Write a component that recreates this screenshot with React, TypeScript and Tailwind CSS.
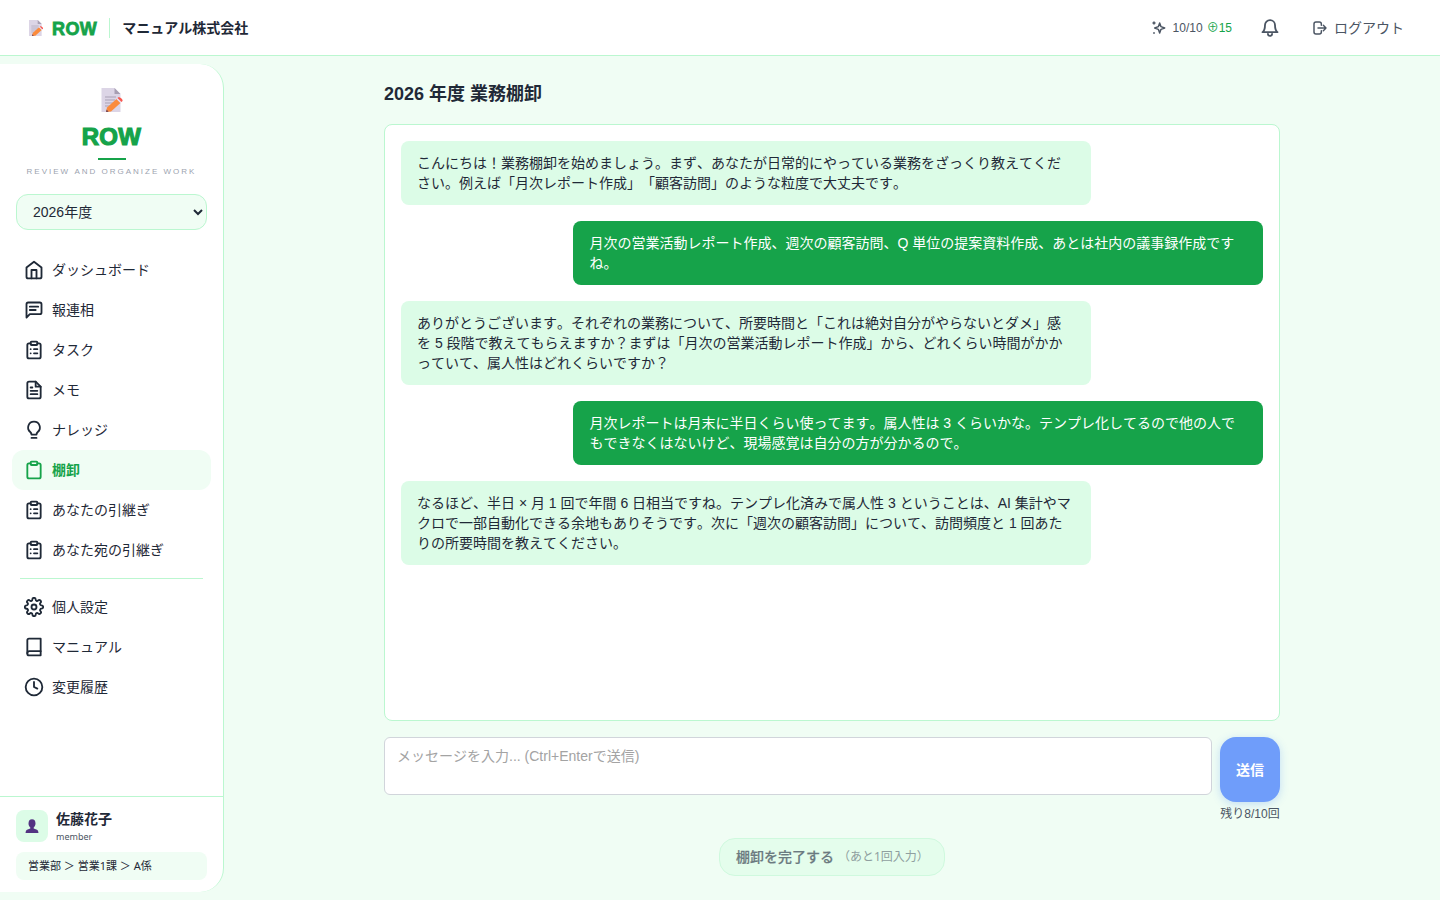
import type { ReactNode } from 'react';

const ICONS: Record<string, ReactNode> = {
  home: (
    <>
      <path d="m3 9 9-7 9 7v11a2 2 0 0 1-2 2H5a2 2 0 0 1-2-2z" />
      <path d="M9 22V12h6v10" />
    </>
  ),
  message: (
    <>
      <path d="M21 15a2 2 0 0 1-2 2H7l-4 4V5a2 2 0 0 1 2-2h14a2 2 0 0 1 2 2z" />
      <path d="M7 8h10M7 12h7" />
    </>
  ),
  clipboard: (
    <>
      <path d="M16 4h2a2 2 0 0 1 2 2v14a2 2 0 0 1-2 2H6a2 2 0 0 1-2-2V6a2 2 0 0 1 2-2h2" />
      <rect x="8" y="2" width="8" height="4" rx="1" />
    </>
  ),
  list: (
    <>
      <path d="M16 4h2a2 2 0 0 1 2 2v14a2 2 0 0 1-2 2H6a2 2 0 0 1-2-2V6a2 2 0 0 1 2-2h2" />
      <rect x="8" y="2" width="8" height="4" rx="1" />
      <path d="M12 11h4M12 16h4M8 11h.01M8 16h.01" />
    </>
  ),
  file: (
    <>
      <path d="M14 2H6a2 2 0 0 0-2 2v16a2 2 0 0 0 2 2h12a2 2 0 0 0 2-2V8z" />
      <path d="M14 2v6h6M16 13H8M16 17H8M10 9H8" />
    </>
  ),
  bulb: <path d="M9 21.5h6M12 2a7 7 0 0 0-4.5 12.4c1 .9 1.5 1.8 1.5 3.1h6c0-1.3.5-2.2 1.500-3.1A7 7 0 0 0 12 2z" />,
  gear: (
    <>
      <circle cx="12" cy="12" r="3" />
      <path d="M19.4 15a1.65 1.65 0 0 0 .33 1.82l.06.06a2 2 0 0 1-2.83 2.83l-.06-.06a1.65 1.65 0 0 0-1.82-.33 1.65 1.65 0 0 0-1 1.51V21a2 2 0 0 1-4 0v-.09A1.65 1.65 0 0 0 9 19.4a1.65 1.65 0 0 0-1.82.33l-.06.06a2 2 0 0 1-2.83-2.83l.06-.06a1.65 1.65 0 0 0 .33-1.82 1.65 1.65 0 0 0-1.51-1H3a2 2 0 0 1 0-4h.09A1.65 1.65 0 0 0 4.6 9a1.65 1.65 0 0 0-.33-1.82l-.06-.06a2 2 0 0 1 2.83-2.83l.06.06a1.65 1.65 0 0 0 1.82.33H9a1.65 1.65 0 0 0 1-1.51V3a2 2 0 0 1 4 0v.09a1.65 1.65 0 0 0 1 1.51 1.65 1.65 0 0 0 1.82-.33l.06-.06a2 2 0 0 1 2.83 2.83l-.06.06a1.65 1.65 0 0 0-.33 1.82V9a1.65 1.65 0 0 0 1.51 1H21a2 2 0 0 1 0 4h-.09a1.65 1.65 0 0 0-1.51 1z" />
    </>
  ),
  book: (
    <>
      <path d="M4 19.5A2.5 2.5 0 0 1 6.5 17H20" />
      <path d="M6 2h14v20H6a2 2 0 0 1-2-2V4a2 2 0 0 1 2-2z" />
    </>
  ),
  clock: (
    <>
      <circle cx="12" cy="12" r="10" />
      <path d="M12 6v6l4 2" />
    </>
  ),
  sparkle: (
    <>
      <path d="M13 4.5l2 5.5 5.5 2-5.5 2-2 5.5-2-5.5-5.5-2 5.5-2z" />
      <path d="M4.500 3v3M3 4.500h3M4 19.500h1" />
    </>
  ),
  bell: <path d="M6 8.5a6 6 0 0 1 12 0c0 6.5 3 8.5 3 8.5H3s3-2 3-8.5M9.5 19a2.5 2.5 0 0 0 5 0" />,
  logout: <path d="M14 8V6a3 3 0 0 0-3-3H6a3 3 0 0 0-3 3v12a3 3 0 0 0 3 3h5a3 3 0 0 0 3-3v-2M9 12h12M17 8l4 4-4 4" />,
};

const Icon = ({ name, className = 'size-5' }: { name: string; className?: string }) => (
  <svg
    className={`shrink-0 ${className}`}
    viewBox="0 0 24 24"
    fill="none"
    stroke="currentColor"
    strokeWidth="2.2"
    strokeLinecap="round"
    strokeLinejoin="round"
  >
    {ICONS[name]}
  </svg>
);

const MemoMark = ({ className }: { className: string }) => (
  <svg className={className} viewBox="0 0 24 24">
    <path d="M1.5 0h13l6 6v18h-19z" fill="#dcd5e6" />
    <path d="M14.5 0l6 6h-6z" fill="#a79fb3" />
    <path d="M5 9h11M5 12h10M5 15h8M5 18h5" stroke="#a9a1b5" strokeWidth="1" />
    <path d="M7 19.5L16.5 11l4 4L11 23.5l-5 .5z" fill="#fb8b3c" />
    <path d="M16.5 11l1.5-1.4 4 4-1.5 1.4z" fill="#e8dff0" />
    <path d="M18 9.6c1.5-1.3 5.5 2 4.5 3.5l-1 .8-4-4z" fill="#f9584f" />
    <path d="M6 24l.6-2.5 2 2.2z" fill="#6b4257" />
  </svg>
);

const MAIN_NAV = [
  { icon: 'home', label: 'ダッシュボード' },
  { icon: 'message', label: '報連相' },
  { icon: 'list', label: 'タスク' },
  { icon: 'file', label: 'メモ' },
  { icon: 'bulb', label: 'ナレッジ' },
  { icon: 'clipboard', label: '棚卸', active: true },
  { icon: 'list', label: 'あなたの引継ぎ' },
  { icon: 'list', label: 'あなた宛の引継ぎ' },
];

const SUB_NAV = [
  { icon: 'gear', label: '個人設定' },
  { icon: 'book', label: 'マニュアル' },
  { icon: 'clock', label: '変更履歴' },
];

const MESSAGES = [
  {
    mine: false,
    text: 'こんにちは！業務棚卸を始めましょう。まず、あなたが日常的にやっている業務をざっくり教えてください。例えば「月次レポート作成」「顧客訪問」のような粒度で大丈夫です。',
  },
  {
    mine: true,
    text: '月次の営業活動レポート作成、週次の顧客訪問、Q 単位の提案資料作成、あとは社内の議事録作成ですね。',
  },
  {
    mine: false,
    text: 'ありがとうございます。それぞれの業務について、所要時間と「これは絶対自分がやらないとダメ」感を 5 段階で教えてもらえますか？まずは「月次の営業活動レポート作成」から、どれくらい時間がかかっていて、属人性はどれくらいですか？',
  },
  {
    mine: true,
    text: '月次レポートは月末に半日くらい使ってます。属人性は 3 くらいかな。テンプレ化してるので他の人でもできなくはないけど、現場感覚は自分の方が分かるので。',
  },
  {
    mine: false,
    text: 'なるほど、半日 × 月 1 回で年間 6 日相当ですね。テンプレ化済みで属人性 3 ということは、AI 集計やマクロで一部自動化できる余地もありそうです。次に「週次の顧客訪問」について、訪問頻度と 1 回あたりの所要時間を教えてください。',
  },
];

const NavItem = ({ icon, label, active }: { icon: string; label: string; active?: boolean }) => (
  <a
    className={`flex h-10 items-center gap-2 rounded-xl px-3 text-sm ${
      active ? 'bg-[#f0fdf4] font-bold text-[#16a34a]' : 'text-[#1f2937]'
    }`}
  >
    <Icon name={icon} />
    {label}
  </a>
);

const Header = () => (
  <header className="flex h-14 shrink-0 items-center justify-between border-b border-[#bbf7d0] bg-white pr-9 pl-7">
    <div className="flex items-center">
      <MemoMark className="size-4" />
      <span className="ml-2 pt-0.5 text-lg font-bold tracking-[0.4px] text-[#16a34a] [-webkit-text-stroke:0.8px_#16a34a]">
        ROW
      </span>
      <span className="mx-3 h-5 w-px bg-[#bbf7d0]" />
      <span className="text-sm font-bold text-[#1f2937]">マニュアル株式会社</span>
    </div>
    <div className="flex items-center text-[#4b5563]">
      <Icon name="sparkle" className="size-4" />
      <span className="ml-1.5 text-xs">10/10</span>
      <span className="ml-1 text-xs text-[#16a34a]">⊕15</span>
      <Icon name="bell" className="ml-7 size-5" />
      <Icon name="logout" className="ml-8 size-4" />
      <span className="ml-1.5 text-sm">ログアウト</span>
    </div>
  </header>
);

const Sidebar = () => (
  <aside className="my-2 flex w-56 shrink-0 flex-col rounded-r-3xl border-r border-[#bbf7d0] bg-white">
    <div className="flex flex-col items-center pt-6">
      <MemoMark className="size-6" />
      <span className="mt-[9px] text-2xl leading-8 font-bold tracking-[0.3px] text-[#16a34a] [-webkit-text-stroke:1.2px_#16a34a]">
        ROW
      </span>
      <span className="mt-[5px] h-0.5 w-7 bg-[#16a34a]" />
      <span className="mt-1.5 text-[8px] leading-3 tracking-[2px] text-[#9ca3af]">REVIEW AND ORGANIZE WORK</span>
    </div>
    <div className="px-4 pt-4">
      <select className="h-9 w-full rounded-xl border border-[#bbf7d0] bg-[#f0fdf4] px-3 text-sm text-[#1f2937]">
        <option>2026年度</option>
      </select>
    </div>
    <nav className="mt-5 flex flex-1 flex-col px-3">
      {MAIN_NAV.map((item) => (
        <NavItem key={item.label} {...item} />
      ))}
      <hr className="mx-2 my-2 border-[#bbf7d0]" />
      {SUB_NAV.map((item) => (
        <NavItem key={item.label} {...item} />
      ))}
    </nav>
    <div className="border-t border-[#bbf7d0] px-4 py-3">
      <div className="flex items-start gap-2">
        <span className="mt-px flex size-8 items-center justify-center rounded-lg bg-[#dcfce7]">
          <svg className="size-3.5" viewBox="0 0 14 14" fill="#533382">
            <path d="M3.5 4.5a3.5 4.3 0 0 1 7 0c0 1.8-.8 3.2-1.8 4v1l3.3 1.3q1.3.6 1.5 3.2H.5q.2-2.6 1.5-3.2l3.3-1.3v-1c-1-.8-1.8-2.2-1.8-4z" />
          </svg>
        </span>
        <div>
          <p className="text-sm leading-5 font-bold text-[#1f2937]">佐藤花子</p>
          <p className="font-['Noto_Sans'] text-[9px] leading-[15px] text-[#4b5563]">member</p>
        </div>
      </div>
      <p className="mt-2 flex h-7 items-center rounded-lg bg-[#f0fdf4] px-3 font-['Noto_Sans','Noto_Sans_CJK_JP',sans-serif] text-[11px] text-[#1f2937]">
        営業部 ＞ 営業1課 ＞ A係
      </p>
    </div>
  </aside>
);

const App = () => {
  return (
    <div className="flex h-screen flex-col overflow-hidden bg-[#f0fdf4] font-['Liberation_Sans','Noto_Sans_CJK_JP',sans-serif] text-[#1f2937] [font-kerning:none] [text-spacing-trim:space-all]">
      <Header />
      <div className="flex min-h-0 flex-1">
        <Sidebar />
        <main className="flex flex-1 flex-col items-center pt-6">
          <div className="flex w-[896px] flex-col">
            <h1 className="text-lg leading-7 font-bold">2026 年度 業務棚卸</h1>
            <div className="mt-4 flex h-[597px] flex-col gap-4 rounded-lg border border-[#bbf7d0] bg-white p-4">
              {MESSAGES.map((message) => (
                <div
                  key={message.text}
                  className={`w-4/5 rounded-lg px-4 py-3 text-sm ${
                    message.mine ? 'self-end bg-[#16a34a] text-white' : 'bg-[#dcfce7]'
                  }`}
                >
                  {message.text}
                </div>
              ))}
            </div>
            <div className="mt-4 flex items-start gap-2">
              <textarea
                className="h-[58px] flex-1 resize-none rounded-md border border-[#d1d5db] bg-white px-3 py-2 text-sm placeholder:text-[#a3a3a3]"
                placeholder="メッセージを入力... (Ctrl+Enterで送信)"
              />
              <div className="flex w-[60px] flex-col items-center">
                <button className="h-[65px] w-full rounded-2xl bg-[#6f9dfa] text-sm font-bold text-white shadow-[0_2px_8px_rgba(59,130,246,0.25)]">
                  送信
                </button>
                <span className="mt-1 text-xs whitespace-nowrap text-[#4b5563]">残り8/10回</span>
              </div>
            </div>
            <button className="mt-4 flex h-[38px] w-[226px] items-center self-center rounded-2xl border border-[#cff9de] bg-[#e4fdec] pl-4 text-sm font-medium text-[#6b7a80] [-webkit-text-stroke:0.2px]">
              棚卸を完了する
              <span className="ml-1 font-['Noto_Sans','Noto_Sans_CJK_JP',sans-serif] text-xs font-normal text-[#8f9fa0] [-webkit-text-stroke:0px]">
                （あと1回入力）
              </span>
            </button>
          </div>
        </main>
      </div>
    </div>
  );
};

export default App;
